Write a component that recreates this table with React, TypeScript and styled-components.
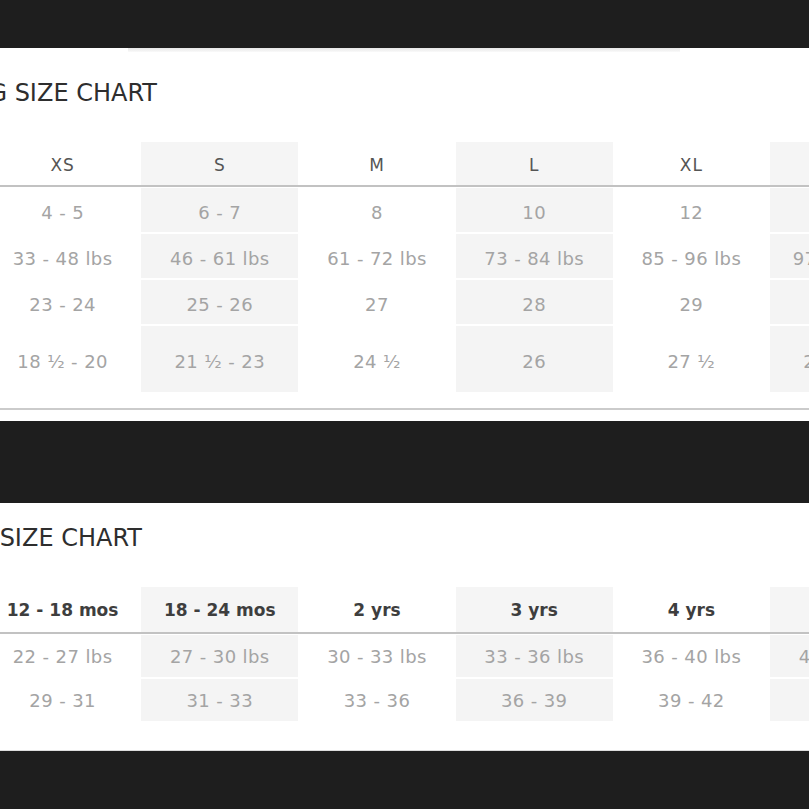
import React from "react";
import styled, { createGlobalStyle } from "styled-components";

interface Chart {
  title: string;
  titleEnd: number;
  boldHead: boolean;
  headHeight: number;
  cellShift: number;
  sizes: string[];
  rows: { height: number; values: string[] }[];
}

const kids: Chart = {
  title: "CLOTHING SIZE CHART",
  titleEnd: 157,
  boldHead: false,
  headHeight: 43,
  cellShift: 4,
  sizes: ["XS", "S", "M", "L", "XL", "XXL"],
  rows: [
    { height: 44, values: ["4 - 5", "6 - 7", "8", "10", "12", "14"] },
    {
      height: 44,
      values: ["33 - 48 lbs", "46 - 61 lbs", "61 - 72 lbs", "73 - 84 lbs", "85 - 96 lbs", "97 - 108 lbs"]
    },
    { height: 44, values: ["23 - 24", "25 - 26", "27", "28", "29", "30"] },
    { height: 66, values: ["18 ½ - 20", "21 ½ - 23", "24 ½", "26", "27 ½", "28 ½ - 30"] }
  ]
};

const toddler: Chart = {
  title: "TODDLER SIZE CHART",
  titleEnd: 142,
  boldHead: true,
  headHeight: 45,
  cellShift: 0,
  sizes: ["12 - 18 mos", "18 - 24 mos", "2 yrs", "3 yrs", "4 yrs", "5 yrs"],
  rows: [
    {
      height: 42,
      values: ["22 - 27 lbs", "27 - 30 lbs", "30 - 33 lbs", "33 - 36 lbs", "36 - 40 lbs", "40 - 45 lbs"]
    },
    { height: 42, values: ["29 - 31", "31 - 33", "33 - 36", "36 - 39", "39 - 42", "42 - 45"] }
  ]
};

const SizeTable: React.FC<{ chart: Chart }> = ({ chart }) => (
  <Table>
    <Grid>
      {chart.sizes.map((size, i) => (
        <HeadCell key={size} $shaded={i % 2 === 1} $bold={chart.boldHead} $height={chart.headHeight}>
          {size}
        </HeadCell>
      ))}
    </Grid>
    <Body>
      {chart.rows.map((row, r) =>
        row.values.map((value, i) => (
          <Cell key={r + "-" + i} $shaded={i % 2 === 1} $height={row.height} $shift={chart.cellShift}>
            {value}
          </Cell>
        ))
      )}
    </Body>
  </Table>
);

const App: React.FC = () => {
  return (
    <>
      <GlobalStyle />
      <Page>
        <Panel $bottom={11}>
          <Shadow />
          <TitleBar $end={kids.titleEnd} $top={27}>
            <Title>{kids.title}</Title>
          </TitleBar>
          <SizeTable chart={kids} />
          <FootLine />
        </Panel>
        <Panel $bottom={29} $edge>
          <TitleBar $end={toddler.titleEnd} $top={21}>
            <Title>{toddler.title}</Title>
          </TitleBar>
          <SizeTable chart={toddler} />
        </Panel>
      </Page>
    </>
  );
};

const GlobalStyle = createGlobalStyle`
  html, body {
    margin: 0;
    padding: 0;
    background: #1e1e1e;
  }
  body {
    font-family: "DejaVu Sans", Verdana, sans-serif;
  }
`;

const Page = styled.div`
  display: flex;
  flex-direction: column;
  gap: 82px;
  min-height: 809px;
  padding-top: 48px;
  box-sizing: border-box;
  background: #1e1e1e;
  overflow: hidden;
`;

const Panel = styled.section<{ $bottom: number; $edge?: boolean }>`
  display: flex;
  flex-direction: column;
  background: #fff;
  overflow: hidden;
  padding-bottom: ${(p) => p.$bottom}px;
  border-bottom: ${(p) => (p.$edge ? "1px solid #dcdcdc" : "none")};
`;

const Shadow = styled.div`
  height: 4px;
  width: 552px;
  margin-left: 128px;
  background: linear-gradient(#e6e6e6, #fafafa);
`;

const TitleBar = styled.div<{ $end: number; $top: number }>`
  display: flex;
  justify-content: flex-end;
  width: ${(p) => p.$end}px;
  margin-top: ${(p) => p.$top}px;
`;

const Title = styled.h2`
  margin: 0;
  flex: none;
  white-space: nowrap;
  font-size: 24px;
  line-height: 28px;
  font-weight: normal;
  color: #2e2e2e;
`;

const Table = styled.div`
  margin: 35px 0 0 -16px;
  width: max-content;
`;

const Grid = styled.div`
  display: grid;
  grid-template-columns: repeat(6, 157.2px);
`;

const Body = styled(Grid)`
  margin-top: 1px;
  row-gap: 2px;
`;

const HeadCell = styled.div<{ $shaded: boolean; $bold: boolean; $height: number }>`
  display: flex;
  align-items: center;
  justify-content: center;
  box-sizing: border-box;
  height: ${(p) => p.$height + 2}px;
  padding-top: ${(p) => (p.$bold ? 0 : 2)}px;
  background: ${(p) => (p.$shaded ? "#f5f5f5" : "#fff")};
  border-bottom: 2px solid #c2c2c2;
  font-size: 17px;
  letter-spacing: ${(p) => (p.$bold ? 0 : 1)}px;
  font-weight: ${(p) => (p.$bold ? "bold" : "normal")};
  color: ${(p) => (p.$bold ? "#3e3e3e" : "#555")};
  white-space: nowrap;
`;

const Cell = styled.div<{ $shaded: boolean; $height: number; $shift: number }>`
  display: flex;
  align-items: center;
  justify-content: center;
  box-sizing: border-box;
  height: ${(p) => p.$height}px;
  padding-top: ${(p) => p.$shift}px;
  background: ${(p) => (p.$shaded ? "#f4f4f4" : "#fff")};
  font-size: 18px;
  letter-spacing: 0.4px;
  color: #a4a4a4;
  white-space: nowrap;
`;

const FootLine = styled.div`
  height: 2px;
  margin-top: 16px;
  background: #cbcbcb;
`;

export default App;
